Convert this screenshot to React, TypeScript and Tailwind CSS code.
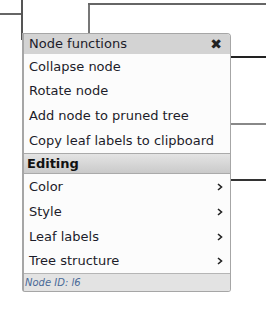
import { ReactNode } from "react";

const FONT = { fontFamily: '"DejaVu Sans", Verdana, sans-serif' };

function Chevron() {
  return (
    <svg width="6" height="8" viewBox="0 0 6 8" className="text-[#222]">
      <path d="M1 1 L4.5 4 L1 7" fill="none" stroke="currentColor" strokeWidth="1.6" />
    </svg>
  );
}

function Item({ label, sub, h }: { label: string; sub?: boolean; h: string }) {
  return (
    <div className={`flex items-center justify-between pl-[5px] pr-[7px] text-[13px] text-[#1c1c2a] ${h}`}>
      <span>{label}</span>
      {sub && <Chevron />}
    </div>
  );
}

function Line({ className }: { className: string }): ReactNode {
  return <div className={`absolute ${className}`} />;
}

export default function App() {
  return (
    <div className="relative h-[319px] w-[266px] overflow-hidden bg-white" style={FONT}>
      {/* tree branches */}
      <Line className="left-0 top-[13px] h-[2px] w-[23px] bg-[#666]" />
      <Line className="left-[21px] top-0 h-[40px] w-[2px] bg-[#555]" />
      <Line className="left-[88px] top-[3px] h-[40px] w-[2px] bg-[#777]" />
      <Line className="left-[88px] top-[3px] h-[2px] w-[178px] bg-[#666]" />
      <Line className="left-[231px] top-[56px] h-[2px] w-[35px] bg-[#222]" />
      <Line className="left-[231px] top-[123px] h-[2px] w-[35px] bg-[#888]" />
      <Line className="left-[231px] top-[179px] h-[2px] w-[35px] bg-[#333]" />

      {/* popup */}
      <div className="absolute left-[22px] top-[33px] flex w-[209px] flex-col overflow-hidden rounded-b-[3px] rounded-tr-[4px] border border-l-2 border-[#a6a6a6] bg-[#fcfcfc]">
        <div className="flex h-[20px] items-center justify-between bg-[#d3d3d3] pl-[5px] pr-[8px] text-[13px] text-[#1c1c2a]">
          <span>Node functions</span>
          <span className="text-[14px] font-bold leading-none text-[#222]">✖</span>
        </div>
        <Item label="Collapse node" h="h-[24.75px]" />
        <Item label="Rotate node" h="h-[24.75px]" />
        <Item label="Add node to pruned tree" h="h-[24.75px]" />
        <Item label="Copy leaf labels to clipboard" h="h-[24.75px]" />
        <div className="flex h-[21px] items-center border-y border-[#aaa] bg-gradient-to-b from-[#e4e4e4] to-[#cacaca] pl-[3px] text-[13px] font-bold text-[#111]">
          Editing
        </div>
        <Item label="Color" sub h="h-[25px]" />
        <Item label="Style" sub h="h-[25px]" />
        <Item label="Leaf labels" sub h="h-[25px]" />
        <Item label="Tree structure" sub h="h-[24px]" />
        <div className="flex h-[18px] items-center border-t border-[#b5b5b5] bg-[#e3e3e3] pl-[1px] text-[10px] italic text-[#4a6a98]">
          Node ID: l6
        </div>
      </div>
    </div>
  );
}
